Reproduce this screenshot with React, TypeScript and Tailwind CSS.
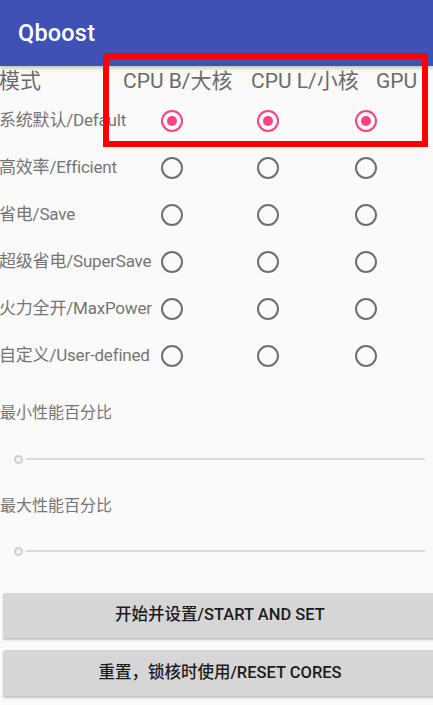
const modes = [
  { label: "系统默认/Default", checked: true },
  { label: "高效率/Efficient", checked: false },
  { label: "省电/Save", checked: false },
  { label: "超级省电/SuperSave", checked: false },
  { label: "火力全开/MaxPower", checked: false },
  { label: "自定义/User-defined", checked: false },
];

const font = { fontFamily: "Roboto, 'Noto Sans CJK SC', sans-serif" };

const Radio = ({ checked }: { checked: boolean }) =>
  checked ? (
    <div className="w-[22px] h-[22px] rounded-full border-2 border-[#ff4081] flex items-center justify-center">
      <div className="w-[10px] h-[10px] rounded-full bg-[#ff4081]" />
    </div>
  ) : (
    <div className="w-[22px] h-[22px] rounded-full border-2 border-[#6f6f6f]" />
  );

const Slider = () => (
  <div className="flex items-center h-[10px] pl-[14px] pr-[8px]">
    <div className="w-[9px] h-[9px] rounded-full border-2 border-[#cfcfcf] bg-[#f4f4f4] shrink-0" />
    <div className="flex-1 h-[2px] bg-[#d9d9d9] ml-[3px]" />
  </div>
);

const App = () => {
  return (
    <div
      className="relative w-[433px] h-[705px] overflow-hidden bg-[#fafafa]"
      style={font}
    >
      <div className="h-[66px] bg-[#3f51b5] shadow-[0_2px_4px_rgba(0,0,0,0.25)] flex items-center px-[18px]">
        <span className="text-white text-[23.5px] font-medium tracking-[0.2px] mt-[2px]">
          Qboost
        </span>
      </div>

      <div className="flex items-center h-[31px] text-[21px] text-[#6a6a6a] whitespace-nowrap">
        <span className="w-[124px] -ml-[1px]">模式</span>
        <span className="w-[128px]">CPU B/大核</span>
        <span className="w-[125px]">CPU L/小核</span>
        <span>GPU</span>
      </div>

      {modes.map((m) => (
        <div key={m.label} className="flex items-center h-[47px]">
          <span className="w-[162px] text-[17px] text-[#757575] whitespace-nowrap -ml-[1px] tracking-[-0.2px]">
            {m.label}
          </span>
          <Radio checked={m.checked} />
          <div className="ml-[74px]">
            <Radio checked={m.checked} />
          </div>
          <div className="ml-[76px]">
            <Radio checked={m.checked} />
          </div>
        </div>
      ))}

      <div className="mt-[23px] text-[16px] text-[#757575] h-[22px] leading-[22px]">
        最小性能百分比
      </div>
      <div className="mt-[30px]">
        <Slider />
      </div>
      <div className="mt-[31px] text-[16px] text-[#757575] h-[22px] leading-[22px]">
        最大性能百分比
      </div>
      <div className="mt-[29px]">
        <Slider />
      </div>

      <div className="mt-[37px] ml-[3px] w-[434px] flex flex-col gap-[12px]">
        <button className="h-[45px] bg-[#d6d6d6] rounded-[2px] shadow-[0_2px_2px_rgba(0,0,0,0.22)] text-[16.5px] text-[#1c1c1c] font-medium">
          开始并设置/START AND SET
        </button>
        <button className="h-[46px] bg-[#d6d6d6] rounded-[2px] shadow-[0_2px_2px_rgba(0,0,0,0.22)] text-[16.5px] text-[#1c1c1c] font-medium">
          重置，锁核时使用/RESET CORES
        </button>
      </div>

      <div className="absolute left-[103px] top-[53px] w-[325px] h-[94px] border-[6px] border-[#ff0000]" />
    </div>
  );
};

export default App;
